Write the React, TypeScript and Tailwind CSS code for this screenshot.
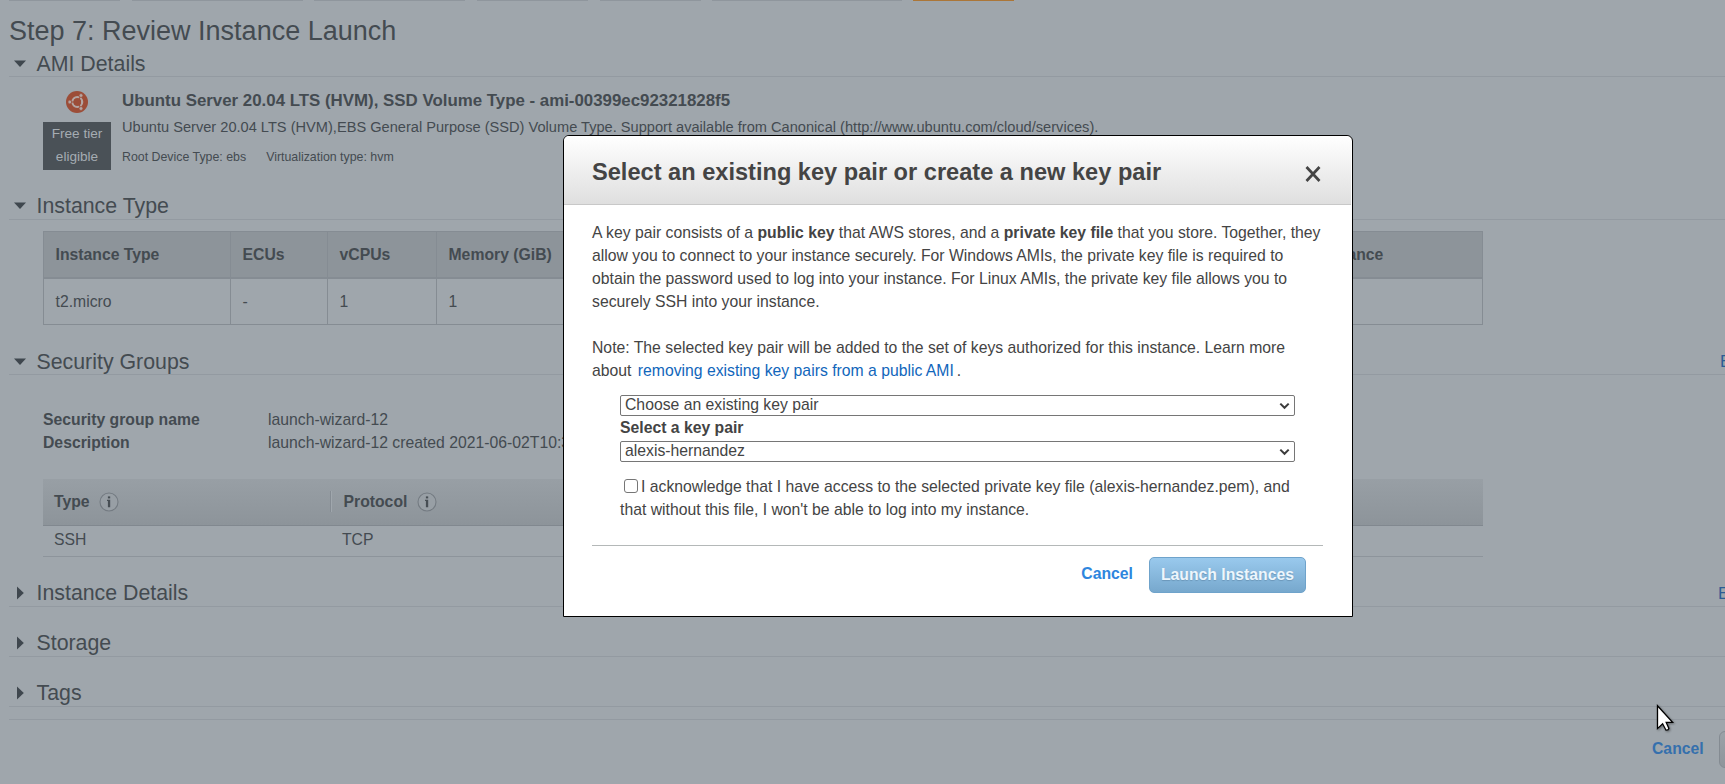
import React from 'react';

function Caret({ open }: { open: boolean }) {
  return (
    <svg className="mr-[10px] h-[14px] w-[14px] shrink-0" viewBox="0 0 14 14">
      {open ? <path d="M1 3.5H13L7 10Z" fill="#3f474e" /> : <path d="M4 0.5V13.5L10.8 7Z" fill="#3f474e" />}
    </svg>
  );
}

function SectionHeader({ title, open, height, edit }: { title: string; open: boolean; height: string; edit?: React.ReactNode }) {
  return (
    <div className={`${height} flex w-[1800px] shrink-0 items-center border-b border-[#939aa1]`}>
      <div className="flex w-[1709px] shrink-0 items-center pl-[3.5px]">
        <Caret open={open} />
        <h2 className="text-[21.33px] leading-[26px]">{title}</h2>
      </div>
      {edit}
    </div>
  );
}

function InfoIcon() {
  return (
    <svg className="ml-[9.5px] mt-px h-[20px] w-[20px]" viewBox="0 0 20 20">
      <circle cx="10" cy="10" r="9" fill="#989fa5" stroke="#747b82" strokeWidth="1.1" />
      <rect x="8.9" y="4.4" width="2.3" height="2" fill="#474e54" />
      <path d="M8 7.8h3.2v7.4H8.9V8.9H8z" fill="#474e54" />
    </svg>
  );
}

function UbuntuLogo() {
  return (
    <svg className="h-[22px] w-[22px]" viewBox="0 0 22 22">
      <circle cx="11" cy="11" r="11" fill="#9c4d38" />
      <circle cx="11.3" cy="11" r="4.9" fill="none" stroke="#b3a5a2" strokeWidth="2.2" />
      <g stroke="#9c4d38" strokeWidth="1.1">
        <path d="M11.3 11L2 11M11.3 11L16 3M11.3 11L16 19" />
      </g>
      <circle cx="11.3" cy="11" r="3.7" fill="#9c4d38" />
      <g fill="#b3a5a2" stroke="#9c4d38" strokeWidth="0.7">
        <circle cx="3.8" cy="11" r="1.9" />
        <circle cx="15" cy="4.5" r="1.9" />
        <circle cx="15" cy="17.5" r="1.9" />
      </g>
    </svg>
  );
}

const columns = [
  { label: 'Instance Type', value: 't2.micro', width: 'w-[187px]' },
  { label: 'ECUs', value: '-', width: 'w-[97px]' },
  { label: 'vCPUs', value: '1', width: 'w-[109px]' },
  { label: 'Memory (GiB)', value: '1', width: 'w-[130px]' },
  { label: 'Instance Storage (GB)', value: 'EBS only', width: 'w-[250px]' },
  { label: 'EBS-Optimized Available', value: '-', width: 'w-[392px]' },
  { label: 'Network Performance', value: 'Low to Moderate', width: 'w-[274px]' },
];

function Select({ value }: { value: string }) {
  return (
    <div className="flex h-[21px] w-[675px] items-center justify-between rounded-[2px] border border-[#767676] bg-white pl-[4px] pr-[4px]">
      <span className="pb-[2px] leading-[17px]">{value}</span>
      <svg className="h-[10px] w-[11px]" viewBox="0 0 11 10">
        <path d="M1.3 2.6L5.5 6.8L9.7 2.6" fill="none" stroke="#3c3c3c" strokeWidth="2" />
      </svg>
    </div>
  );
}

function KeyPairDialog() {
  return (
    <div role="dialog" className="absolute left-[563px] top-[135px] h-[482px] w-[790px] rounded-t-[6px] border border-black bg-white text-[#444]">
      <div className="mr-px flex h-[69px] items-center justify-between rounded-t-[5px] border-b border-[#c8c8c8] bg-linear-to-b from-white to-[#dfdfdf] pl-7 pr-[30px] pt-1">
        <h1 className="whitespace-nowrap text-[23.6px] font-bold leading-[30px]">Select an existing key pair or create a new key pair</h1>
        <svg className="mt-[4px] h-[16px] w-[16px]" viewBox="0 0 16 16">
          <path d="M1.5 1L14.5 15M14.5 1L1.5 15" stroke="#444" strokeWidth="2.7" />
        </svg>
      </div>
      <div className="whitespace-nowrap pl-7 pt-4">
        <p>
          A key pair consists of a <b>public key</b> that AWS stores, and a <b>private key file</b> that you store. Together, they
          <br />
          allow you to connect to your instance securely. For Windows AMIs, the private key file is required to
          <br />
          obtain the password used to log into your instance. For Linux AMIs, the private key file allows you to
          <br />
          securely SSH into your instance.
        </p>
        <p className="mt-[23px]">
          Note: The selected key pair will be added to the set of keys authorized for this instance. Learn more
          <br />
          about <a className="ml-[2px] mr-[3px] text-[#1166bb]">removing existing key pairs from a public AMI</a>.
        </p>
        <div className="pl-7 pt-[13px]">
          <Select value="Choose an existing key pair" />
          <div className="mb-[2px] font-bold">Select a key pair</div>
          <Select value="alexis-hernandez" />
          <p className="mt-[13px] h-[46px]">
            <span className="relative top-px ml-1 mr-[3px] inline-block h-[14px] w-[14px] rounded-[3px] border border-[#767676] bg-white align-baseline" />
            I acknowledge that I have access to the selected private key file (alexis-hernandez.pem), and
            <br />
            that without this file, I won't be able to log into my instance.
          </p>
        </div>
        <div className="mt-6 flex w-[731px] items-start justify-end border-t border-[#b4b8b8] pr-[17px] pt-[11px] font-bold">
          <a className="mr-[16px] mt-[5px] text-[#2e86de]">Cancel</a>
          <button className="h-[36px] w-[157px] rounded-[5px] border border-[#6fa3cb] bg-linear-to-b from-[#99c9ed] to-[#77a8cd] pb-px text-[#edf6fc] [text-shadow:0_1px_1px_#6b96b8]">
            Launch Instances
          </button>
        </div>
      </div>
    </div>
  );
}

export default function App() {
  return (
    <div className="relative h-[784px] w-[1725px] overflow-hidden bg-[#9fa6ac] pl-[9px] font-['Liberation_Sans',Arial,sans-serif] text-[15.75px] leading-[23px] text-[#444b51]">
      <div className="flex h-px">
        <div className="mr-3 w-[111px] bg-[#8f969d]" />
        <div className="mr-[11px] w-[171px] bg-[#8f969d]" />
        <div className="mr-3 w-[151px] bg-[#8f969d]" />
        <div className="mr-[12px] w-[111px] bg-[#8f969d]" />
        <div className="mr-[11px] w-[101px] bg-[#8f969d]" />
        <div className="mr-[11px] w-[190px] bg-[#8f969d]" />
        <div className="w-[101px] bg-[#ab7638]" />
      </div>
      <h1 className="mt-[10px] text-[27px] leading-[40px]">Step 7: Review Instance Launch</h1>

      <SectionHeader title="AMI Details" open height="h-[26px]" />
      <div className="flex h-[116px] pl-[34px] pt-[14px]">
        <div className="flex w-[68px] flex-col items-center">
          <UbuntuLogo />
          <div className="mt-[9px] h-[48px] w-[68px] bg-[#4a5157] text-center text-[13.6px] text-[#a5acb2]">
            Free tier
            <br />
            eligible
          </div>
        </div>
        <div className="ml-[11px] whitespace-nowrap">
          <div className="text-[16.87px] font-bold leading-[20px]">Ubuntu Server 20.04 LTS (HVM), SSD Volume Type - ami-00399ec92321828f5</div>
          <div className="mt-[4px] text-[14.62px] leading-[24px]">
            Ubuntu Server 20.04 LTS (HVM),EBS General Purpose (SSD) Volume Type. Support available from Canonical (http://www.ubuntu.com/cloud/services).
          </div>
          <div className="mt-[8px] flex gap-5 text-[12.37px] leading-[20px]">
            <span>Root Device Type: ebs</span>
            <span>Virtualization type: hvm</span>
          </div>
        </div>
      </div>

      <SectionHeader title="Instance Type" open height="h-[27px]" />
      <div className="h-[129px] pl-[34px] pt-[11px]">
        <div className="w-[1440px] border-b border-r border-[#858c93]">
          <div className="flex h-[48px] border-b-2 border-t border-[#858c93] bg-[#8d949a] font-bold">
            {columns.map((c) => (
              <div key={c.label} className={`${c.width} flex shrink-0 items-center whitespace-nowrap border-l border-[#858c93] pb-px pl-[11.5px]`}>
                {c.label}
              </div>
            ))}
          </div>
          <div className="flex h-[45px]">
            {columns.map((c) => (
              <div key={c.label} className={`${c.width} flex shrink-0 items-center whitespace-nowrap border-l border-[#858c93] pb-px pl-[11.5px]`}>
                {c.value}
              </div>
            ))}
          </div>
        </div>
      </div>

      <SectionHeader
        title="Security Groups"
        open
        height="h-[26px]"
        edit={<a className="shrink-0 whitespace-nowrap pl-[2px] text-[16.87px] text-[#2c5c94]">Edit security groups</a>}
      />
      <div className="h-[205px] pl-[34px] pt-[33px]">
        <dl className="grid grid-cols-[225px_1fr]">
          <dt className="font-bold">Security group name</dt>
          <dd>launch-wizard-12</dd>
          <dt className="font-bold">Description</dt>
          <dd>launch-wizard-12 created 2021-06-02T10:33:25.210-05:00</dd>
        </dl>
        <div className="mt-[25px] flex h-[47px] w-[1440px] items-center border-b border-[#81888f] bg-linear-to-b from-[#989fa5] to-[#8d949a] pb-px pl-[11px] font-bold">
          <div className="flex w-[276px] items-center">
            Type
            <InfoIcon />
          </div>
          <div className="flex h-[21px] items-center border-l border-[#858c93] pl-[12.5px] shadow-[inset_1px_0_0_#a0a7ad]">
            Protocol
            <InfoIcon />
          </div>
        </div>
        <div className="flex h-[31px] w-[1440px] items-center border-b border-[#8d949b] pb-[3px] pl-[11px]">
          <div className="w-[288px]">SSH</div>
          <div>TCP</div>
        </div>
      </div>

      <SectionHeader
        title="Instance Details"
        open={false}
        height="h-[27px]"
        edit={<a className="shrink-0 whitespace-nowrap text-[16.87px] text-[#2c5c94]">Edit instance details</a>}
      />
      <div className="h-[23px]" />
      <SectionHeader title="Storage" open={false} height="h-[27px]" />
      <div className="h-[23px]" />
      <SectionHeader title="Tags" open={false} height="h-[27px]" />

      <div className="mt-[12px] flex w-[1800px] items-start border-t border-[#939aa1] pl-[1643px] pt-[11px] font-bold">
        <a className="mr-[15px] mt-[6px] text-[#3570ad]">Cancel</a>
        <button className="h-[37px] w-[80px] shrink-0 rounded-[6px] border border-[#848b92] bg-linear-to-b from-[#9ba2a8] to-[#8e959b]" />
      </div>

      <KeyPairDialog />

      <svg className="absolute left-[1654px] top-[703px] h-[32px] w-[24px] drop-shadow-[1px_1px_1px_rgba(0,0,0,0.4)]" viewBox="0 0 24 32">
        <path d="M3.5 2.8V25.6L8.6 20.8L12 27.2Q14.6 27.4 14.9 25.4L12.2 19.4H18.6Z" fill="#fff" stroke="#000" strokeWidth="1.3" strokeLinejoin="miter" />
      </svg>
    </div>
  );
}
